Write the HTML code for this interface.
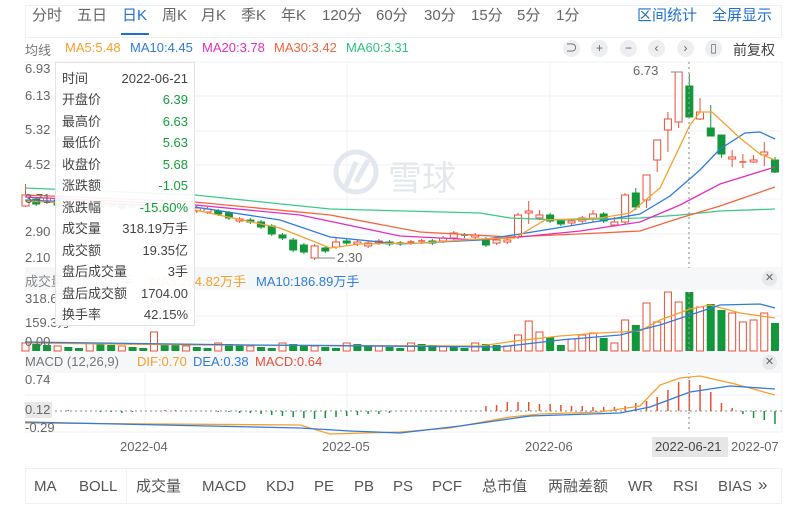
<!DOCTYPE html>
<html><head><meta charset="utf-8"><style>
*{margin:0;padding:0;box-sizing:border-box}
body{width:800px;height:508px;background:#fff;font-family:"Liberation Sans","Noto Sans CJK SC",sans-serif;position:relative;overflow:hidden;color:#666}
.a{position:absolute;white-space:nowrap}
.tabs{position:absolute;left:25px;top:5px;width:757px;height:33px;border:1px solid #eef0f3}
.t{position:absolute;top:6px;font-size:15px;color:#666;line-height:20px}
.b{color:#1f6fd1}
.tt{position:absolute;left:55px;top:62px;width:140px;height:264px;background:rgba(255,255,255,.92);border:1px solid #e3e3e3;font-size:13px;color:#444}
.r{position:absolute;left:6px;right:6px;height:20px;line-height:20px}
.r span{position:absolute;right:0}
.g{color:#14a03c}
.bt{position:absolute;left:25px;top:468px;width:757px;height:36px;border:1px solid #eef0f3}
.bt div{position:absolute;top:8px;font-size:15px;color:#555;line-height:20px}
.ic{position:absolute;top:40px;width:17px;height:17px;border-radius:50%;background:#eceef1;color:#666;font-size:12px;text-align:center;line-height:17px}
</style></head><body>
<svg id="s" width="800" height="508" style="position:absolute;left:0;top:0"></svg>

<div class="tabs"></div>
<div class="t a" style="left:32px">分时</div>
<div class="t a" style="left:77px">五日</div>
<div class="t a b" style="left:122px">日K</div>
<div class="a" style="left:121px;top:33px;width:28px;height:2px;background:#1f6fd1"></div>
<div class="t a" style="left:162px">周K</div>
<div class="t a" style="left:201px">月K</div>
<div class="t a" style="left:241px">季K</div>
<div class="t a" style="left:281px">年K</div>
<div class="t a" style="left:322px">120分</div>
<div class="t a" style="left:376px">60分</div>
<div class="t a" style="left:424px">30分</div>
<div class="t a" style="left:471px">15分</div>
<div class="t a" style="left:517px">5分</div>
<div class="t a" style="left:556px">1分</div>
<div class="t a b" style="left:637px">区间统计</div>
<div class="t a b" style="left:712px">全屏显示</div>

<div class="a" style="left:25px;top:40px;font-size:13px;color:#777">均线</div>
<div class="a" style="left:65px;top:40px;font-size:13px;color:#f7a02b">MA5:5.48</div>
<div class="a" style="left:130px;top:40px;font-size:13px;color:#2f7be0">MA10:4.45</div>
<div class="a" style="left:202px;top:40px;font-size:13px;color:#e12fbf">MA20:3.78</div>
<div class="a" style="left:274px;top:40px;font-size:13px;color:#f5633c">MA30:3.42</div>
<div class="a" style="left:346px;top:40px;font-size:13px;color:#2ec27e">MA60:3.31</div>
<div class="ic" style="left:563px">⊃</div>
<div class="ic" style="left:591px">+</div>
<div class="ic" style="left:620px">−</div>
<div class="ic" style="left:648px">‹</div>
<div class="ic" style="left:677px">›</div>
<div class="ic" style="left:705px">▯</div>
<div class="a" style="left:733px;top:40px;font-size:14px;color:#444">前复权</div>

<div class="a" style="left:25px;top:61px;font-size:13px">6.93</div>
<div class="a" style="left:25px;top:88px;font-size:13px">6.13</div>
<div class="a" style="left:25px;top:122px;font-size:13px">5.32</div>
<div class="a" style="left:25px;top:157px;font-size:13px">4.52</div>
<div class="a" style="left:25px;top:191px;font-size:13px">3.71</div>
<div class="a" style="left:25px;top:224px;font-size:13px">2.90</div>
<div class="a" style="left:25px;top:250px;font-size:13px">2.10</div>
<div class="a" style="left:633px;top:63px;font-size:13px">6.73</div>
<div class="a" style="left:337px;top:250px;font-size:13px">2.30</div>

<div class="a" style="left:25px;top:268px;width:757px;height:22px;background:#f6f7f8"></div>
<div class="a" style="left:25px;top:271px;font-size:13px;color:#888">成交量 318.19万手</div>
<div class="a" style="left:150px;top:271px;font-size:13px;color:#f7a02b">MA5:264.82万手</div>
<div class="a" style="left:256px;top:271px;font-size:13px;color:#2f7be0">MA10:186.89万手</div>
<div class="a" style="left:762px;top:271px;width:15px;height:15px;border-radius:50%;background:#e6e8eb;font-size:11px;text-align:center;line-height:15px">✕</div>
<div class="a" style="left:25px;top:288px;font-size:13px">318.6万</div>
<div class="a" style="left:25px;top:312px;font-size:13px">159.3万</div>
<div class="a" style="left:25px;top:334px;font-size:13px">0.00</div>

<div class="a" style="left:25px;top:352px;width:757px;height:21px;background:#f6f7f8"></div>
<div class="a" style="left:25px;top:354px;font-size:13px;color:#777">MACD (12,26,9)</div>
<div class="a" style="left:137px;top:354px;font-size:13px;color:#f7a02b">DIF:0.70</div>
<div class="a" style="left:193px;top:354px;font-size:13px;color:#2f7be0">DEA:0.38</div>
<div class="a" style="left:255px;top:354px;font-size:13px;color:#e8503a">MACD:0.64</div>
<div class="a" style="left:762px;top:355px;width:15px;height:15px;border-radius:50%;background:#e6e8eb;font-size:11px;text-align:center;line-height:15px">✕</div>
<div class="a" style="left:25px;top:372px;font-size:13px">0.74</div>
<div class="a" style="left:25px;top:402px;width:27px;height:16px;background:#e8e8e8"></div>
<div class="a" style="left:25px;top:402px;font-size:13px">0.12</div>
<div class="a" style="left:25px;top:420px;font-size:13px">-0.29</div>

<div class="a" style="left:120px;top:439px;font-size:13px">2022-04</div>
<div class="a" style="left:322px;top:439px;font-size:13px">2022-05</div>
<div class="a" style="left:525px;top:439px;font-size:13px">2022-06</div>
<div class="a" style="left:652px;top:437px;width:76px;height:20px;background:#e6e6e6"></div>
<div class="a" style="left:655px;top:439px;font-size:13px;color:#444">2022-06-21</div>
<div class="a" style="left:731px;top:439px;font-size:13px">2022-07</div>

<div class="tt">
<div class="r" style="top:6px">时间<span>2022-06-21</span></div>
<div class="r" style="top:27px">开盘价<span class="g">6.39</span></div>
<div class="r" style="top:49px">最高价<span class="g">6.63</span></div>
<div class="r" style="top:70px">最低价<span class="g">5.63</span></div>
<div class="r" style="top:92px">收盘价<span class="g">5.68</span></div>
<div class="r" style="top:113px">涨跌额<span class="g">-1.05</span></div>
<div class="r" style="top:135px">涨跌幅<span class="g">-15.60%</span></div>
<div class="r" style="top:156px">成交量<span>318.19万手</span></div>
<div class="r" style="top:178px">成交额<span>19.35亿</span></div>
<div class="r" style="top:199px">盘后成交量<span>3手</span></div>
<div class="r" style="top:221px">盘后成交额<span>1704.00</span></div>
<div class="r" style="top:242px">换手率<span>42.15%</span></div>
</div>

<div class="bt">
<div class="b" style="left:8px">MA</div>
<div style="left:53px">BOLL</div>
<div style="left:100px;top:0;width:1px;height:34px;background:#eef0f3"></div>
<div class="b" style="left:110px">成交量</div>
<div class="b" style="left:176px">MACD</div>
<div style="left:240px">KDJ</div>
<div style="left:288px">PE</div>
<div style="left:328px">PB</div>
<div style="left:367px">PS</div>
<div style="left:406px">PCF</div>
<div style="left:456px">总市值</div>
<div style="left:522px">两融差额</div>
<div style="left:602px">WR</div>
<div style="left:647px">RSI</div>
<div style="left:692px;width:33px;overflow:hidden">BIAS</div>
<div style="left:732px;font-size:17px;top:6px">»</div>
</div>

<script>
var s=document.getElementById('s'),h='';
function L(x1,y1,x2,y2,c,w,d){h+='<line x1="'+x1+'" y1="'+y1+'" x2="'+x2+'" y2="'+y2+'" stroke="'+c+'" stroke-width="'+(w||1)+'"'+(d?' stroke-dasharray="'+d+'"':'')+'/>';}
function P(pts,c){h+='<polyline fill="none" stroke="'+c+'" stroke-width="1.3" points="'+pts+'"/>';}
[62,96,131,165,199,234,268].forEach(function(y){L(25,y,782,y,'#f1f2f4');});
[316,340].forEach(function(y){L(25,y,782,y,'#f1f2f4');});
[395,432].forEach(function(y){L(25,y,782,y,'#f1f2f4');});
[145,347,550,782].forEach(function(x){L(x,62,x,432,'#f1f2f4');});
h+='<g fill="none" stroke="#e3e7ee" stroke-width="5"><circle cx="356" cy="172" r="20"/></g><path d="M346 186 L356 162 M356 182 L368 160" stroke="#e3e7ee" stroke-width="5" fill="none"/>';
h+='<text x="388" y="190" font-size="34" fill="#e3e7ee" font-family="Noto Sans CJK SC,sans-serif">雪球</text>';
var R='#ea4f35',G='#12973a';
var C={0:[195,206,'r',184,207],1:[199,204,'g'],2:[198,202,'r'],3:[200,205,'g'],4:[201,204,'r'],5:[202,206,'g'],6:[203,205,'r'],7:[203,207,'g'],8:[204,206,'r'],9:[205,208,'g'],10:[205,207,'r'],11:[206,209,'g'],12:[204,210,'r'],13:[207,210,'g'],14:[207,209,'r'],15:[208,211,'g'],
16:[208,211,'r'],17:[209,212,'r'],18:[211,214,'g'],19:[213,218,'g'],20:[219,221,'r'],21:[220,222,'g'],22:[222,227,'g'],23:[226,234,'g'],24:[235,238,'g'],25:[240,250,'g'],26:[245,252,'g'],27:[246,258,'r'],28:[248,251,'g'],29:[242,247,'r',237,249],30:[241,243,'g'],31:[242,244,'r'],32:[243,246,'r'],33:[241,243,'r'],34:[242,244,'g'],35:[243,244,'g'],36:[242,243,'r'],37:[241,242,'r'],38:[241,243,'g'],39:[238,241,'r'],40:[233,238,'r'],41:[235,236,'g'],42:[235,237,'r'],43:[239,245,'g'],44:[240,243,'r'],45:[240,242,'r'],46:[215,237,'r'],47:[211,213,'r',201,224],48:[215,218,'r',210,220],49:[215,221,'g'],50:[221,224,'g'],51:[221,223,'r'],52:[218,221,'r'],53:[214,218,'r',210,222],54:[214,221,'g'],55:[222,225,'r',217,226],56:[195,222,'r'],57:[193,207,'g',188,210],58:[175,200,'r',175,208],59:[140,160,'r',140,172],60:[119,130,'r',112,152],61:[72,122,'r',72,128],62:[86,117,'g',74,117],63:[112,119,'r',98,120],64:[128,136,'g',105,136],65:[135,154,'g',135,158],66:[157,159,'r',150,167],67:[162,163,'r',154,168],68:[160,162,'r',155,163],69:[152,155,'r',142,166],70:[160,172,'g',157,173]};
var V={12:[332,'r'],46:[335,'r'],47:[321,'r'],48:[332,'r'],49:[337,'g'],50:[345,'g'],51:[339,'r'],52:[335,'r'],53:[333,'r'],54:[338,'g'],55:[343,'r'],56:[320,'r'],57:[325,'g'],58:[303,'r'],59:[322,'r'],60:[292,'r'],61:[302,'r'],62:[292,'g'],63:[307,'r'],64:[304,'g'],65:[310,'g'],66:[313,'r'],67:[322,'r'],68:[320,'r'],69:[313,'r'],70:[323,'g']};
var M={43:5,44:6,45:9,46:9,47:9,48:7,49:7,50:6,51:5,52:5,53:4,54:4,55:4,56:5,57:8,58:10,59:14,60:21,61:29,62:31,63:26,64:19,65:8,66:3,67:-3,68:-7,69:-9,70:-13,
4:1,13:1,14:1,7:-1,8:-1,9:-2,10:-1,18:-1,19:-1,20:-2,21:-2,22:-3,23:-4,24:-5,25:-6,26:-7,27:-8,28:-7,29:-6,30:-5,31:-4,32:-3,33:-3,34:-2};
L(25,411,782,411,'#888',1,'2,3');
for(var i=0;i<=70;i++){
 var x=25.5+10.707*i,c=C[i];
 if(c){var col=c[2]=='r'?R:G,t=c[0],b=c[1];
  var wt=c[3]||t-2,wb=c[4]||b+2;
  L(x,wt,x,t,col);L(x,b,x,wb,col);
  if(b-t<2){L(x-3.5,t,x+3.5,t,col,1.5);}
  else h+='<rect x="'+(x-3.5)+'" y="'+t+'" width="7" height="'+(b-t)+'" fill="'+(c[2]=='r'?'#fff':G)+'" stroke="'+col+'"/>';
 }
 var v=V[i]||[343+((i*7)%6),(i%3==0)?'r':'g'];
 if(v[1]=='r')h+='<rect x="'+(x-3.5)+'" y="'+v[0]+'" width="7" height="'+(351-v[0])+'" fill="#fff" stroke="'+R+'"/>';
 else h+='<rect x="'+(x-4)+'" y="'+v[0]+'" width="8" height="'+(351-v[0])+'" fill="'+G+'"/>';
 var m=M[i];
 if(m===undefined)m=0;
 if(m>0)L(x,411-m,x,411,R,1.5);else if(m<0)L(x,411,x,411-m,G,1.5);
}
L(671,72,681,72,'#888');L(316,258,335,258,'#888');
P('25,188 195,195 330,209 480,213 510,218 560,220 640,218 680,215 720,211 775,209','#3cc98a');
P('25,195 195,202 330,215 420,232 510,237 600,233 640,231 680,218 720,206 775,187','#f5643c');
P('25,197 195,205 300,215 400,236 480,240 520,237 580,231 640,222 680,205 720,184 775,167','#e12fbf');
P('25,200 195,207 280,220 330,237 400,244 480,240 520,234 600,221 640,214 670,196 700,170 720,149 745,133 760,132 775,139','#2f7be0');
P('25,201 195,210 280,228 330,248 360,244 420,243 480,239 515,238 545,220 600,218 630,213 660,188 690,125 700,112 712,112 740,138 760,154 775,160','#f7a02b');
P('25,343 200,345 480,346 515,341 560,336 600,333 640,331 660,320 690,309 710,305 740,313 775,318','#f7a02b');
P('25,342 250,345 500,347 560,340 620,335 660,325 690,315 720,305 760,304 775,308','#2f7be0');
P('25,423 300,425 330,434 400,432 450,428 510,417 540,414 600,412 640,406 660,385 680,378 700,376 735,384 775,395','#f7a02b');
P('25,422 300,428 350,431 400,433 460,426 530,416 620,413 650,407 690,392 730,386 775,389','#2f7be0');
L(689,62,689,432,'#999',1.2,'2,3');
s.innerHTML=h;
</script>
</body></html>
